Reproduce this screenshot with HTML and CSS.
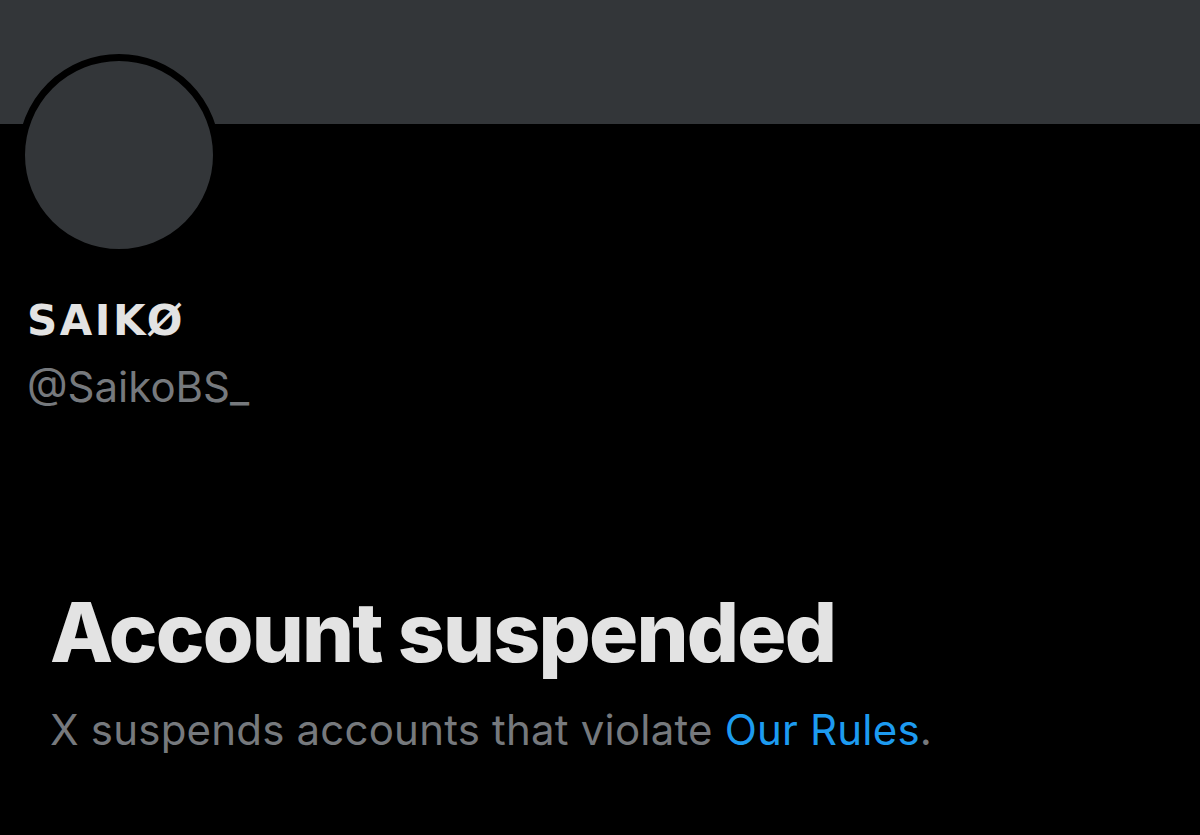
FILE: index.html
```html
<!DOCTYPE html>
<html lang="en">
<head>
<meta charset="utf-8">
<title>SAIKØ (@SaikoBS_)</title>
<link rel="stylesheet" href="styles.css">
</head>
<body>
<div class="page">
  <div class="banner"></div>
  <div class="profile">
    <div class="avatar"></div>
    <div class="names">
      <div class="name">SAIKØ</div>
      <div class="handle">@SaikoBS_</div>
    </div>
  </div>
  <div class="suspended">
    <h1 class="title">Account suspended</h1>
    <p class="desc">X suspends accounts that violate <a class="link" href="#">Our Rules</a>.</p>
  </div>
</div>
</body>
</html>
```

FILE: styles.css
```css
html, body {
  margin: 0;
  padding: 0;
  background: #000;
}
body {
  width: 1200px;
  height: 835px;
  overflow: hidden;
  font-family: Inter, "Liberation Sans", sans-serif;
}
.page {
  display: flex;
  flex-direction: column;
}
.banner {
  height: 124px;
  background: #333639;
}
.profile {
  padding-left: 18px;
  display: flex;
  flex-direction: column;
}
.avatar {
  width: 188px;
  height: 188px;
  border: 7px solid #000;
  border-radius: 50%;
  background: #333639;
  margin-top: -70px;
}
.names {
  padding-left: 9px;
  margin-top: 41px;
}
.name {
  font-family: "DejaVu Sans", Inter, sans-serif;
  font-size: 42px;
  line-height: 48px;
  font-weight: 700;
  color: #e3e3e3;
  letter-spacing: 2.5px;
}
.handle {
  font-family: Inter, "Liberation Sans", sans-serif;
  font-size: 42px;
  line-height: 50px;
  color: #76797d;
  margin-top: 17px;
}
.suspended {
  padding-left: 50px;
  margin-top: 171px;
}
.title {
  margin: 0;
  font-size: 82px;
  line-height: 100px;
  font-weight: 800;
  color: #e3e3e3;
  letter-spacing: -1.8px;
}
.desc {
  margin: 22px 0 0;
  font-family: Inter, "Liberation Sans", sans-serif;
  font-size: 42px;
  line-height: 50px;
  color: #76797d;
  letter-spacing: 0.2px;
}
.link {
  color: #1d9bf0;
  text-decoration: none;
}
```
